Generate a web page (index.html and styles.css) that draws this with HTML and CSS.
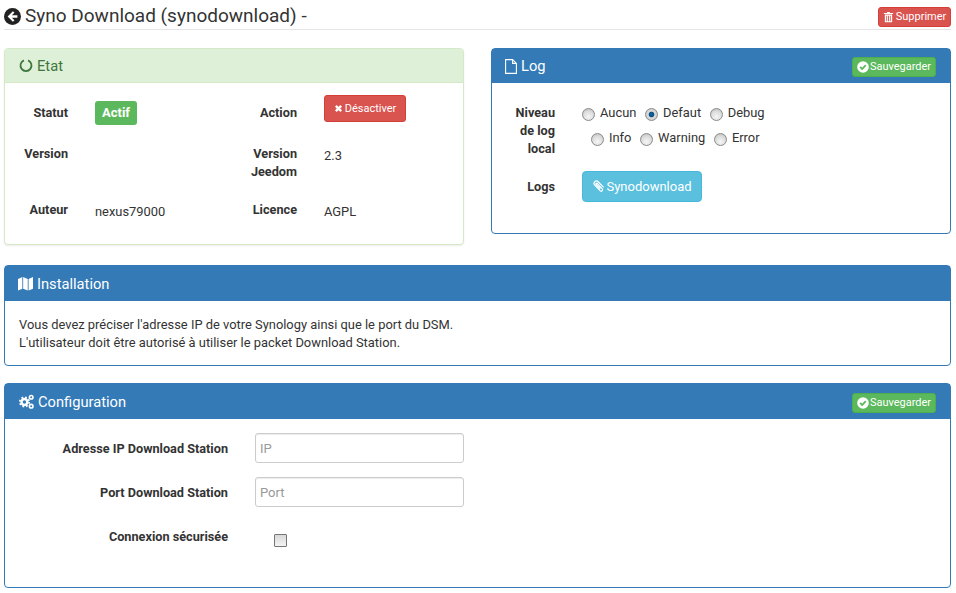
FILE: index.html
```html
<!DOCTYPE html>
<html>
<head>
  <title>Syno Download</title>
  <link rel="stylesheet" href="styles.css">
</head>
<body>

<div class="page-title">
  <h3>
    <svg class="back-icon" viewBox="0 0 16 16"><circle cx="8" cy="8" r="8" fill="#222"/><path d="M8.400 3 3.400 8l5 5 1.400-1.400-2.400-2.400h5.200V6.800H7.400l2.400-2.400z" fill="#fff"/></svg>
    Syno Download (synodownload) -
  </h3>
  <button class="btn btn-red btn-small">
    <svg class="icon trash" viewBox="0 0 12 12"><path d="M4.200 1.600 4.800.6h2.400l.6 1H11v1H1v-1zM2 3.400h8v7.400c0 .6-.4 1-1 1H3c-.6 0-1-.4-1-1zm1.600 1.200v6h.9v-6zm1.900 0v6h1v-6zm2 0v6h.9v-6z" fill="#fff" fill-rule="evenodd"/></svg>Supprimer
  </button>
</div>

<div class="top-row">
  <div class="panel panel-green">
    <div class="panel-heading">
      <span class="panel-title">
        <svg class="title-icon" viewBox="0 0 16 16"><path d="M5.600 2.200a6.300 6.300 0 1 0 4.800 0" fill="none" stroke="#3c763d" stroke-width="2"/></svg>Etat
      </span>
    </div>
    <div class="etat-body">
      <div class="info-row row-one">
        <div class="info-label">Statut</div>
        <div class="info-value"><span class="badge">Actif</span></div>
        <div class="info-label">Action</div>
        <div class="info-value action-cell">
          <button class="btn btn-red btn-off">
            <svg class="icon small-x" viewBox="0 0 10 10"><path d="M2 2l6 6M8 2 2 8" stroke="#fff" stroke-width="2.600" fill="none"/></svg>Désactiver
          </button>
        </div>
      </div>
      <div class="info-row row-two">
        <div class="info-label">Version</div>
        <div class="info-value"></div>
        <div class="info-label">Version Jeedom</div>
        <div class="info-value">2.3</div>
      </div>
      <div class="info-row row-three">
        <div class="info-label">Auteur</div>
        <div class="info-value">nexus79000</div>
        <div class="info-label">Licence</div>
        <div class="info-value">AGPL</div>
      </div>
    </div>
  </div>

  <div class="panel panel-blue log-panel">
    <div class="panel-heading">
      <span class="panel-title">
        <svg class="title-icon file-icon" viewBox="0 0 12 15"><path d="M.6.600h7l3.800 3.800v10H.6zM7.600.600v3.800h3.800" fill="none" stroke="#fff" stroke-width="1.100"/></svg>Log
      </span>
      <button class="btn btn-green btn-small">
        <svg class="icon" viewBox="0 0 12 12"><circle cx="6" cy="6" r="5.800" fill="#fff"/><path d="M3.200 6 5.200 8 8.800 4.200" fill="none" stroke="#5cb85c" stroke-width="1.800"/></svg>Sauvegarder
      </button>
    </div>
    <div class="log-body">
      <div class="log-row">
        <div class="log-label level-label">Niveau de log local</div>
        <div class="radio-lines">
          <div class="radio-line">
            <label class="radio-item"><input type="radio" name="level">Aucun</label>
            <label class="radio-item"><input type="radio" name="level" checked>Defaut</label>
            <label class="radio-item"><input type="radio" name="level">Debug</label>
          </div>
          <div class="radio-line second-line">
            <label class="radio-item"><input type="radio" name="level">Info</label>
            <label class="radio-item"><input type="radio" name="level">Warning</label>
            <label class="radio-item"><input type="radio" name="level">Error</label>
          </div>
        </div>
      </div>
      <div class="log-row logs-row">
        <div class="log-label">Logs</div>
        <button class="btn btn-cyan">
          <svg class="icon clip" viewBox="0 0 14 14"><path d="M12.500 8 6.600 1.900C5.500.9 4 .9 3 1.900S1.900 4.400 3 5.500L8.600 11.500c.7.700 1.700.700 2.300.100s.6-1.600-.1-2.300L5.600 3.700c-.4-.3-.9-.3-1.200 0s-.3.900 0 1.200l4.500 4.500" fill="none" stroke="#fff" stroke-width="1.300"/></svg>Synodownload
        </button>
      </div>
    </div>
  </div>
</div>

<div class="panel panel-blue install-panel">
  <div class="panel-heading tall">
    <span class="panel-title">
      <svg class="title-icon map-icon" viewBox="0 0 16 16"><path d="M0 3.200 4.600 1v12.500L0 15.400zM5.500 1l4.900 2.100v12.400l-4.900-2zM11.300 3.100 16 1v12.500l-4.700 2z" fill="#fff"/></svg>Installation
    </span>
  </div>
  <div class="install-body">
    Vous devez préciser l'adresse IP de votre Synology ainsi que le port du DSM.<br>
    L'utilisateur doit être autorisé à utiliser le packet Download Station.
  </div>
</div>

<div class="panel panel-blue config-panel">
  <div class="panel-heading tall">
    <span class="panel-title">
      <svg class="title-icon cogs-icon" viewBox="0 0 16 16">
        <circle cx="5.800" cy="8.500" r="3.100" fill="none" stroke="#fff" stroke-width="2.600"/>
        <circle cx="5.800" cy="8.500" r="5" fill="none" stroke="#fff" stroke-width="1.800" stroke-dasharray="2 1.930"/>
        <circle cx="13" cy="3.500" r="1.900" fill="none" stroke="#fff" stroke-width="1.700"/>
        <circle cx="13" cy="13" r="1.900" fill="none" stroke="#fff" stroke-width="1.700"/>
      </svg>Configuration
    </span>
    <button class="btn btn-green btn-small">
      <svg class="icon" viewBox="0 0 12 12"><circle cx="6" cy="6" r="5.800" fill="#fff"/><path d="M3.200 6 5.200 8 8.800 4.200" fill="none" stroke="#5cb85c" stroke-width="1.800"/></svg>Sauvegarder
    </button>
  </div>
  <div class="config-body">
    <div class="config-row">
      <label class="config-label">Adresse IP Download Station</label>
      <input class="text-input" type="text" placeholder="IP">
    </div>
    <div class="config-row">
      <label class="config-label">Port Download Station</label>
      <input class="text-input" type="text" placeholder="Port">
    </div>
    <div class="config-row check-row">
      <label class="config-label">Connexion sécurisée</label>
      <input class="check" type="checkbox">
    </div>
  </div>
</div>

</body>
</html>
```

FILE: styles.css
```css
* {
  box-sizing: border-box;
}

body {
  margin: 0;
  padding: 0 5px 0 4px;
  font-family: Roboto, 'Liberation Sans', sans-serif;
  font-size: 12.900px;
  line-height: 18px;
  color: #333;
  background: #fff;
}

.page-title {
  display: flex;
  justify-content: space-between;
  align-items: flex-start;
  height: 30px;
  border-bottom: 1px solid #e5e5e5;
  margin-bottom: 18px;
}

.page-title h3 {
  display: flex;
  align-items: center;
  gap: 4px;
  margin: 0;
  padding-top: 4px;
  font-size: 19px;
  font-weight: 400;
  line-height: 24px;
  color: #333;
}

.back-icon {
  width: 17px;
  height: 17px;
}

.btn {
  display: inline-flex;
  align-items: center;
  justify-content: center;
  border: 1px solid transparent;
  border-radius: 3px;
  font-family: inherit;
  color: #fff;
  padding: 0;
}

.btn-small {
  height: 20px;
  font-size: 11px;
  line-height: 16px;
}

.page-title .btn-small {
  width: 73px;
  margin-top: 7px;
}

.panel-heading .btn-small {
  margin-top: 2px;
}

.panel-heading.tall .btn-small {
  margin-top: 3px;
}

.btn-red {
  background: #d9534f;
  border-color: #d43f3a;
}

.btn-green {
  background: #5cb85c;
  border-color: #4cae4c;
  width: 84px;
}

.btn-cyan {
  width: 120px;
  height: 31px;
  font-size: 13px;
  border-color: #46b8da;
  background: #5bc0de;
  border-radius: 4px;
}

.btn-off {
  width: 82px;
  height: 27px;
  font-size: 11px;
}

.icon {
  width: 12px;
  height: 12px;
  margin-right: 1px;
}

.trash {
  width: 11px;
  height: 12px;
  margin-right: 2px;
}

.small-x {
  width: 9px;
  height: 9px;
  margin-right: 2px;
}

.clip {
  width: 13px;
  height: 13px;
  margin-right: 1px;
}

.top-row {
  display: grid;
  grid-template-columns: 460px 460px;
  column-gap: 27px;
  align-items: start;
  margin-bottom: 20px;
}

.panel {
  border: 1px solid #337ab7;
  border-radius: 4px;
  background: #fff;
}

.panel-green {
  border-color: #d6e9c6;
  height: 197px;
  box-shadow: 0 1px 2px rgba(0, 0, 0, 0.08);
}

.panel-heading {
  display: flex;
  justify-content: space-between;
  align-items: center;
  height: 34px;
  padding: 0 14px;
  color: #fff;
  background: #337ab7;
}

.panel-heading.tall {
  height: 35px;
}

.panel-green .panel-heading {
  color: #3c763d;
  background: #dff0d8;
  border-bottom: 1px solid #d6e9c6;
}

.panel-title {
  display: flex;
  align-items: center;
  font-size: 14.700px;
}

.title-icon {
  width: 14px;
  height: 15px;
  margin-right: 4px;
}

.file-icon {
  width: 12px;
  margin-left: -1px;
}

.map-icon {
  width: 15px;
  margin-left: -1px;
}

.cogs-icon {
  width: 15px;
}

.info-row {
  display: grid;
  grid-template-columns: 63px 102px 73px 1fr;
  column-gap: 27px;
}

.row-one {
  height: 53px;
  padding-top: 12px;
}

.row-two {
  height: 56px;
}

.info-label {
  padding-top: 9px;
  text-align: right;
  font-weight: 700;
  font-size: 12.700px;
}

.info-value {
  padding-top: 11px;
}

.row-one .info-value {
  padding-top: 6px;
}

.row-one .action-cell {
  padding-top: 0;
}

.badge {
  display: inline-block;
  width: 42px;
  height: 24px;
  border-radius: 3px;
  background: #5cb85c;
  color: #fff;
  font-weight: 700;
  font-size: 13px;
  line-height: 24px;
  text-align: center;
}

.log-panel {
  height: 186px;
}

.log-body {
  padding-top: 21px;
}

.log-row {
  display: grid;
  grid-template-columns: 63px 1fr;
  column-gap: 27px;
}

.log-label {
  font-weight: 700;
  font-size: 12.700px;
  text-align: right;
}

.level-label {
  padding-left: 15px;
}

.radio-line {
  display: flex;
  height: 25px;
}

.second-line {
  padding-left: 9px;
}

.radio-item {
  display: flex;
  align-items: center;
  height: 18px;
  margin-right: 8.600px;
}

.radio-item input {
  appearance: none;
  width: 13px;
  height: 13px;
  margin: 2px 5px 0 0;
  border: 1px solid #8a8a8a;
  border-radius: 50%;
  background: radial-gradient(circle at 50% 70%, #f6f6f6 0, #dcdcdc 55%, #b8b8b8 100%);
}

.radio-item input:checked {
  background: radial-gradient(circle at 50% 50%, #0d6ba8 0, #0b4f80 30%, #dcdcdc 42%, #c0c0c0 100%);
}

.logs-row {
  margin-top: 13px;
  align-items: center;
}

.install-body {
  padding: 15px 14px 0;
  height: 64px;
}

.install-panel {
  margin-bottom: 17px;
}

.config-panel {
  height: 205px;
}

.config-body {
  padding-top: 14px;
}

.config-row {
  display: grid;
  grid-template-columns: 223px 209px;
  column-gap: 27px;
  height: 44px;
}

.config-label {
  padding-top: 7px;
  font-weight: 700;
  font-size: 12.700px;
  text-align: right;
}

.text-input {
  height: 30px;
  padding: 0 4px;
  border: 1px solid #ccc;
  border-radius: 3px;
  font-family: inherit;
  font-size: 13px;
  box-shadow: inset 0 1px 1px rgba(0, 0, 0, 0.075);
}

.text-input::placeholder {
  color: #999;
}

.check {
  appearance: none;
  width: 13px;
  height: 13px;
  margin: 13px 0 0 19px;
  border: 1px solid #767676;
  border-radius: 1px;
  background: linear-gradient(to bottom, #d8d8d8, #f4f4f4);
}
```
